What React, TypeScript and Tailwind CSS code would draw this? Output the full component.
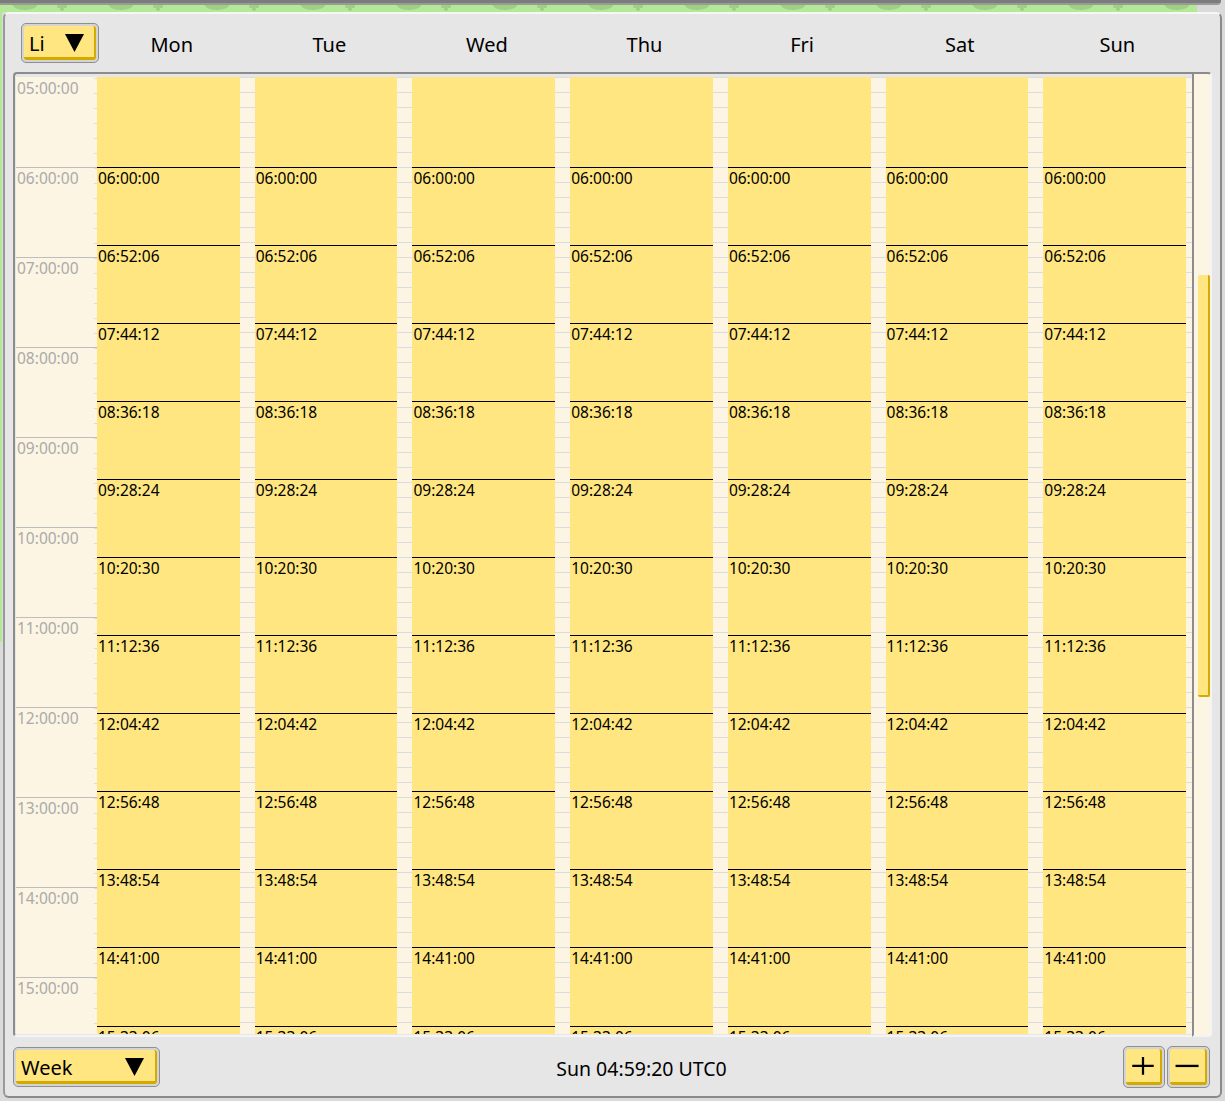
import React from "react";

const DAYS = ["Mon", "Tue", "Wed", "Thu", "Fri", "Sat", "Sun"];
const HOURS = Array.from({ length: 12 }, (_, i) => i + 5);

// slots start at 06:00:00, one every 52:06
const SLOTS = Array.from({ length: 13 }, (_, i) => {
  const s = 6 * 3600 + i * 3126;
  const p = (n: number) => String(n).padStart(2, "0");
  return `${p(Math.floor(s / 3600))}:${p(Math.floor((s % 3600) / 60))}:${p(s % 60)}`;
});

const font = { fontFamily: '"Noto Sans", "Open Sans", sans-serif' };

function Arrow() {
  return (
    <svg width="19" height="18" viewBox="0 0 19 18" className="block">
      <polygon points="0,0 19,0 9.5,18" fill="#000" />
    </svg>
  );
}

function YellowButton({ className, children }: { className: string; children: React.ReactNode }) {
  return (
    <div className={`shrink-0 rounded-[5px] border border-[#8f8f8f] bg-[#d4d4d4] p-[2px] ${className}`}>
      <div className="flex h-full items-center rounded-[3px] border-r-2 border-b-[3px] border-[#d4aa00] bg-[#ffe680]">
        {children}
      </div>
    </div>
  );
}

function Bumps() {
  const xs = Array.from({ length: 13 }, (_, i) => i * 96);
  return (
    <svg width="1197" height="8" className="block">
      {xs.map((x) => (
        <g key={x} fill="#9fcf83">
          <path d={`M${x + 13} 0 A12 5 0 0 0 ${x + 37} 0 Z`} />
          <rect x={x + 57} y="0" width="10" height="3" rx="1.5" />
          <rect x={x + 60} y="2" width="4" height="4" rx="2" />
        </g>
      ))}
    </svg>
  );
}

function GapColumn({ width }: { width: string }) {
  return (
    <div className={`${width} shrink-0 bg-[#fcf5e3]`}>
      {Array.from({ length: 66 }, (_, i) => (
        <div key={i} className="h-[15px] border-t border-[#dcdcdc]" />
      ))}
    </div>
  );
}

function DayColumn() {
  return (
    <div className="min-w-0 flex-1 bg-[#ffe680]">
      <div className="h-[89.5px]" />
      {SLOTS.map((t) => (
        <div key={t} className="h-[78.1px] border-t border-black pl-[1px] text-[15.5px] leading-[21px] text-black">
          {t}
        </div>
      ))}
    </div>
  );
}

export default function App() {
  return (
    <div className="relative h-[1101px] w-[1225px] overflow-hidden bg-[#dadada]" style={font}>
      {/* window behind */}
      <div className="h-[5px] w-[1221px] rounded-br-[4px] border-b-2 border-[#9a9a9a] bg-[#7c7c7c]" />
      <div className="h-[7px] w-[1197px] bg-[#b3e896]">
        <Bumps />
      </div>
      <div className="absolute top-[12px] left-0 h-[630px] w-[2px] bg-[#b3e896]" />

      {/* main panel */}
      <div className="ml-[3px] flex h-[1086px] w-[1219px] flex-col rounded-[6px] border-2 border-t-[#f7f7f7] border-r-[#8a8a8a] border-b-[#8a8a8a] border-l-[#9a9a9a] bg-[#e6e6e6]">
        {/* header */}
        <div className="flex h-[58px] shrink-0 items-center">
          <div className="w-[88px] shrink-0 pl-[16px]">
            <YellowButton className="h-[40px] w-[78px]">
              <span className="mt-[4px] ml-[5px] text-[20px] leading-[24px] text-black">Li</span>
              <span className="mt-[2px] ml-[20px]">
                <Arrow />
              </span>
            </YellowButton>
          </div>
          <div className="flex w-[1103px] pt-[4px]">
            {DAYS.map((d) => (
              <div key={d} className="flex-1 text-center text-[20px] leading-[28px] text-black">
                {d}
              </div>
            ))}
          </div>
        </div>

        {/* grid + scrollbar */}
        <div className="mx-[8px] flex h-[965px] shrink-0">
          <div className="flex min-w-0 flex-1 rounded-l-[4px] border-t-2 border-b-2 border-l-2 border-t-[#8c8c8c] border-b-[#f4f4f4] border-l-[#8c8c8c] pt-[3px] pb-[1px] pl-[1px]">
            <div className="flex flex-1 overflow-hidden">
              {/* time labels */}
              <div className="w-[81px] shrink-0 bg-[#fcf5e3]">
                {HOURS.map((h) => (
                  <div key={h} className="flex h-[90px] border-t border-[#bdbdbd] first:border-transparent">
                    <div className="flex-1 pl-[1px] text-[15.5px] leading-[21px] text-[#aaaaaa]">
                      {String(h).padStart(2, "0")}:00:00
                    </div>
                    <div className="w-[3px]">
                      {Array.from({ length: 6 }, (_, i) => (
                        <div key={i} className="h-[15px] border-t border-[#dcdcdc]" />
                      ))}
                    </div>
                  </div>
                ))}
              </div>
              {/* days */}
              {DAYS.map((d, i) => (
                <React.Fragment key={d}>
                  <DayColumn />
                  <GapColumn width={i === DAYS.length - 1 ? "w-[6px]" : "w-[15px]"} />
                </React.Fragment>
              ))}
            </div>
          </div>

          <div className="w-[20px] shrink-0 rounded-r-[4px] border-t-2 border-r-2 border-b-2 border-l-2 border-t-[#8c8c8c] border-r-[#f4f4f4] border-b-[#f4f4f4] border-l-[#8c8c8c] bg-[#fcf5e3] pl-[4px]">
            <div className="mt-[201px] h-[422px] w-[12px] rounded-[2px] border-r-2 border-b-2 border-[#d4aa00] bg-[#ffe680]" />
          </div>
        </div>

        {/* footer */}
        <div className="flex h-[59px] shrink-0 items-center pr-[10px] pl-[8px]">
          <YellowButton className="h-[40px] w-[147px]">
            <span className="mt-[5px] ml-[5px] text-[20px] leading-[24px] text-black">Week</span>
            <span className="mt-[3px] mr-[11px] ml-auto">
              <Arrow />
            </span>
          </YellowButton>
          <div className="flex-1 pt-[4px] text-center text-[19.5px] leading-[26px] text-black">Sun 04:59:20 UTC0</div>
          <div className="flex gap-[2px]">
            <YellowButton className="h-[42px] w-[42px]">
              <svg width="38" height="34" viewBox="0 0 38 34" className="block">
                <path d="M7 18H31M19 8V28" stroke="#000" strokeWidth="2.5" />
              </svg>
            </YellowButton>
            <YellowButton className="h-[42px] w-[43px]">
              <svg width="38" height="34" viewBox="0 0 38 34" className="block">
                <path d="M6 18H31" stroke="#000" strokeWidth="2.5" />
              </svg>
            </YellowButton>
          </div>
        </div>
      </div>
    </div>
  );
}
